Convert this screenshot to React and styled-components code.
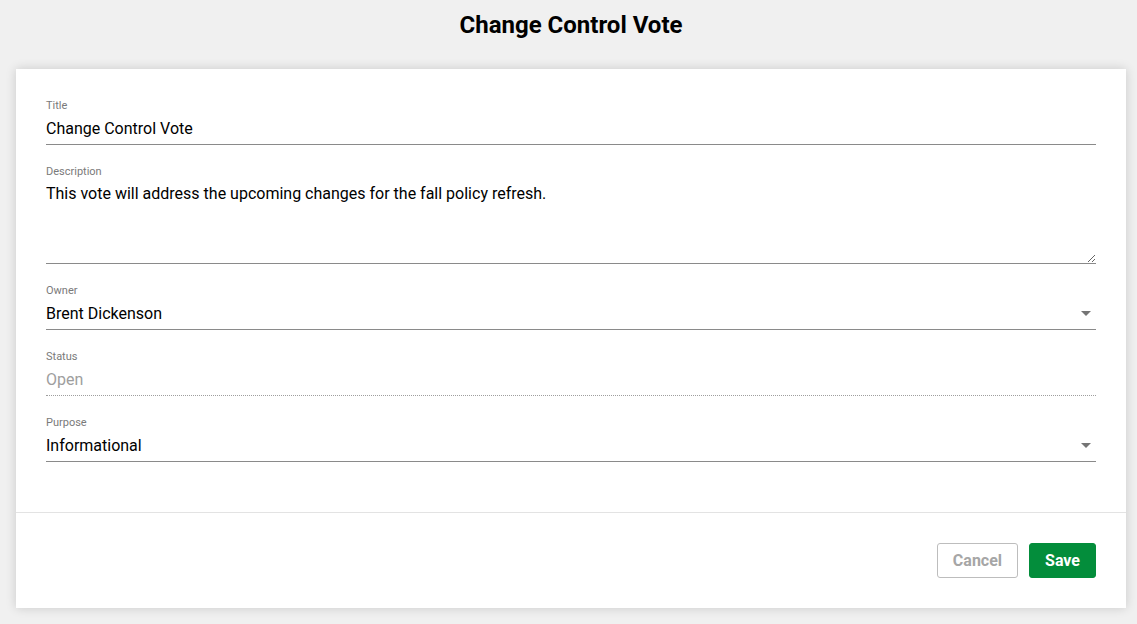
import styled, { createGlobalStyle } from 'styled-components';

const GlobalStyle = createGlobalStyle`
  body {
    margin: 0;
    background: #f0f0f0;
    font-family: Roboto, "Liberation Sans", Arial, sans-serif;
  }
`;

const FIELDS = [
  { kind: 'input', label: 'Title', value: 'Change Control Vote' },
  {
    kind: 'textarea',
    label: 'Description',
    value: 'This vote will address the upcoming changes for the fall policy refresh.',
  },
  { kind: 'select', label: 'Owner', value: 'Brent Dickenson' },
  { kind: 'static', label: 'Status', value: 'Open' },
  { kind: 'select', label: 'Purpose', value: 'Informational' },
];

function Caret() {
  return (
    <CaretIcon width="10" height="5" viewBox="0 0 10 5">
      <path d="M0 0h10L5 5z" fill="#757575" />
    </CaretIcon>
  );
}

function FieldControl({ field }) {
  if (field.kind === 'textarea') {
    return <TextArea defaultValue={field.value} />;
  }
  if (field.kind === 'select') {
    return (
      <SelectWrap>
        <Select defaultValue={field.value}>
          <option>{field.value}</option>
        </Select>
        <Caret />
      </SelectWrap>
    );
  }
  if (field.kind === 'static') {
    return <Input value={field.value} disabled readOnly $dotted />;
  }
  return <Input defaultValue={field.value} />;
}

export default function App() {
  return (
    <>
      <GlobalStyle />
      <Page>
        <Heading>Change Control Vote</Heading>
        <Card>
          <Form>
            {FIELDS.map((field) => (
              <Field key={field.label}>
                <Label>{field.label}</Label>
                <FieldControl field={field} />
              </Field>
            ))}
          </Form>
          <Footer>
            <Button type="button">Cancel</Button>
            <Button type="button" $primary>
              Save
            </Button>
          </Footer>
        </Card>
      </Page>
    </>
  );
}

const Page = styled.div`
  padding: 10px 11px 17px 16px;
`;

const Heading = styled.h1`
  margin: 0;
  font-size: 24px;
  line-height: 30px;
  font-weight: 700;
  color: #000;
  text-align: center;
`;

const Card = styled.div`
  margin-top: 29px;
  background: #fff;
  box-shadow: 0 0 10px rgba(0, 0, 0, 0.16);
`;

const Form = styled.div`
  display: flex;
  flex-direction: column;
  gap: 20px;
  padding: 30px 30px 50px;
`;

const Field = styled.div`
  display: flex;
  flex-direction: column;
`;

const Label = styled.label`
  font-size: 11px;
  line-height: 13px;
  color: #7a7a7a;
`;

const baseControl = `
  box-sizing: border-box;
  width: 100%;
  margin: 0;
  padding: 0;
  border: none;
  border-bottom: 1px solid #8a8a8a;
  background: transparent;
  font-family: Roboto, "Liberation Sans", Arial, sans-serif;
  font-size: 16px;
  color: #000;
  outline: none;
`;

const Input = styled.input`
  ${baseControl}
  height: 33px;
  ${(p) =>
    p.$dotted &&
    `
    border-bottom: 1px dotted #9e9e9e;
    color: #9e9e9e;
    -webkit-text-fill-color: #9e9e9e;
  `}
`;

const TextArea = styled.textarea`
  ${baseControl}
  display: block;
  height: 86px;
  padding-top: 6px;
  line-height: 20px;
  resize: vertical;
`;

const SelectWrap = styled.div`
  position: relative;
`;

const Select = styled.select`
  ${baseControl}
  display: block;
  height: 33px;
  appearance: none;
  -webkit-appearance: none;
`;

const CaretIcon = styled.svg`
  position: absolute;
  right: 5px;
  top: 14px;
  pointer-events: none;
`;

const Footer = styled.div`
  display: flex;
  justify-content: flex-end;
  gap: 11px;
  padding: 30px;
  border-top: 1px solid #e3e3e3;
`;

const Button = styled.button`
  height: 35px;
  padding: 0 15px;
  border-radius: 3px;
  font-family: Roboto, "Liberation Sans", Arial, sans-serif;
  font-size: 16px;
  font-weight: 700;
  cursor: pointer;
  border: 1px solid ${(p) => (p.$primary ? '#038d3b' : '#bdbdbd')};
  background: ${(p) => (p.$primary ? '#038d3b' : '#fff')};
  color: ${(p) => (p.$primary ? '#fff' : '#a6a6a6')};
`;
